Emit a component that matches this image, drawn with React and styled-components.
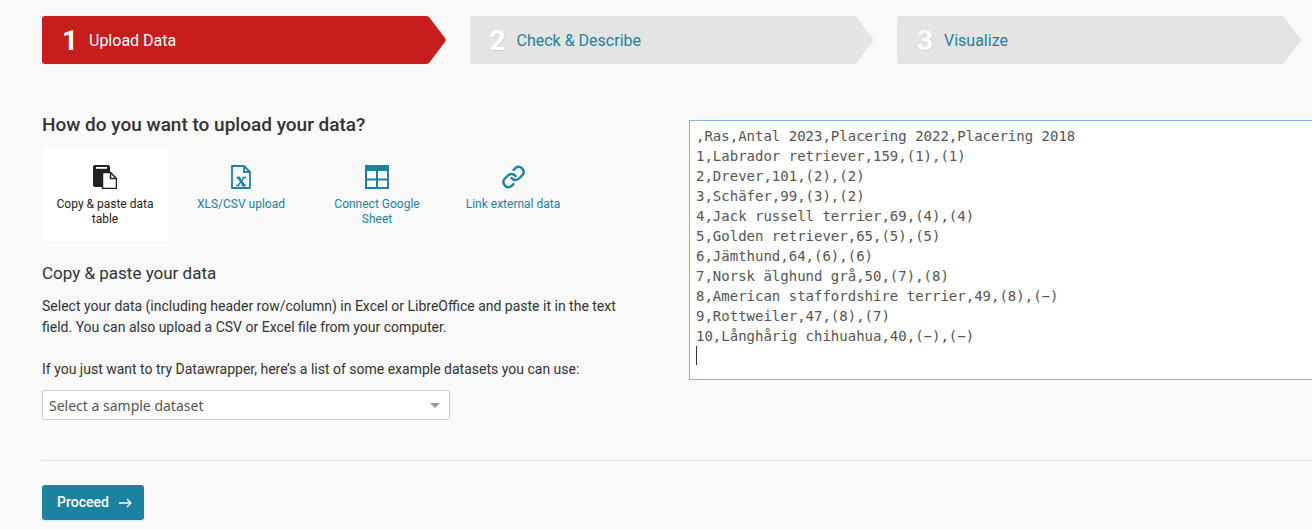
import styled, { createGlobalStyle } from "styled-components";

const GlobalStyle = createGlobalStyle`
html, body {
  margin: 0;
  background: #f9f9f9;
  overflow: hidden;
}
body {
  font-family: Roboto, "Liberation Sans", sans-serif;
  color: #333;
}
`;

const Page = styled.div`
height: 529px;
padding: 16px 0 0 42px;
box-sizing: border-box;
`;

const Steps = styled.div`
display: grid;
grid-template-columns: repeat(3, 404px);
column-gap: 23.5px;
`;

const Step = styled.div`
height: 48px;
display: flex;
align-items: center;
padding-left: 20px;
border-radius: 3px;
background: ${(p) => (p.$active ? "#c71e1d" : "#e4e4e4")};
clip-path: polygon(
  0 0,
  calc(100% - 19px) 0,
  calc(100% - 17px) 1px,
  calc(100% - 1px) 22px,
  100% 24px,
  calc(100% - 1px) 26px,
  calc(100% - 17px) 47px,
  calc(100% - 19px) 100%,
  0 100%
);
`;

const StepNumber = styled.span`
width: 27px;
font-size: 28px;
font-weight: 700;
color: #fff;
text-shadow: ${(p) => (p.$active ? "none" : "1px 1px 1px rgba(0,0,0,0.08)")};
`;

const StepLabel = styled.span`
font-size: 16px;
color: ${(p) => (p.$active ? "#fff" : "#1d81a2")};
`;

const Columns = styled.div`
display: grid;
grid-template-columns: 647px 1fr;
margin-top: 48px;
`;

const Left = styled.div`
padding-top: 2px;
`;

const Heading = styled.h3`
margin: 0 0 12px;
font-size: 19px;
line-height: 22px;
font-weight: 500;
color: #333;
`;

const Tabs = styled.div`
display: flex;
gap: 10px;
`;

const Tab = styled.div`
width: 126px;
height: 93px;
box-sizing: border-box;
padding: 17px 8px 0;
border-radius: 4px;
display: flex;
flex-direction: column;
align-items: center;
gap: 8px;
text-align: center;
font-size: 12px;
line-height: 15px;
background: ${(p) => (p.$active ? "#fff" : "transparent")};
color: ${(p) => (p.$active ? "#222" : "#1d81a2")};
svg {
  flex: none;
  display: block;
}
`;

const SubHeading = styled.h4`
margin: 22px 0 13px;
font-size: 17px;
line-height: 20px;
font-weight: 400;
color: #333;
`;

const Paragraph = styled.p`
margin: 0 0 21px;
width: 590px;
font-size: 14px;
line-height: 21px;
color: #333;
`;

const SelectBox = styled.div`
width: 408px;
height: 30px;
box-sizing: border-box;
margin-top: -11px;
padding: 0 9px 0 6px;
display: flex;
align-items: center;
justify-content: space-between;
background: #fff;
border: 1px solid #ccc;
border-radius: 2px;
font-family: "Noto Sans", "Open Sans", sans-serif;
font-size: 14px;
color: #555;
`;

const SelectArrow = styled.span`
width: 0;
height: 0;
border-left: 5px solid transparent;
border-right: 5px solid transparent;
border-top: 5px solid #999;
`;

const DataWrap = styled.div`
position: relative;
height: 260px;
margin-top: 8px;
overflow: hidden;
`;

const DataField = styled.textarea`
display: block;
width: calc(100% + 20px);
height: 100%;
box-sizing: border-box;
margin: 0;
padding: 5px 6px 6px;
border: 1px solid #7ab8e8;
border-radius: 0;
outline: none;
resize: none;
overflow: hidden;
background: #fff;
font-family: "DejaVu Sans Mono", "Liberation Mono", monospace;
font-size: 14px;
line-height: 20px;
color: #555;
`;

const Caret = styled.span`
position: absolute;
left: 7px;
top: 226px;
width: 1px;
height: 19px;
background: #333;
`;

const Divider = styled.hr`
margin: 40px 0 24px;
border: 0;
border-top: 1px solid #e5e5e5;
`;

const ProceedButton = styled.button`
width: 102px;
height: 35px;
padding: 0 0 2px 15px;
box-sizing: border-box;
display: flex;
align-items: center;
gap: 10px;
border: 0;
border-radius: 3px;
background: #1d81a2;
box-shadow: 0 1px 2px rgba(0, 0, 0, 0.1);
font-family: inherit;
font-size: 14px;
font-weight: 500;
color: #fff;
svg {
  margin-top: 2px;
}
`;

const CopyIcon = () => (
  <svg width="24" height="24" viewBox="0 0 24 24">
    <path fill="#222" d="M2 0h13a2 2 0 0 1 2 2v20H2a2 2 0 0 1-2-2V2a2 2 0 0 1 2-2z" />
    <rect x="3" y="2" width="11" height="1.800" fill="#fff" />
    <path fill="#fff" stroke="#222" strokeWidth="1.500" strokeLinejoin="round" d="M9.500 7.500h8l6 6v10h-14z" />
    <path fill="none" stroke="#222" strokeWidth="1.500" d="M17.500 7.500v6h6" />
  </svg>
);

const FileIcon = () => (
  <svg width="20" height="24" viewBox="0 0 20 24">
    <path fill="none" stroke="#1d81a2" strokeWidth="1.800" strokeLinejoin="round" d="M1 1h12l6 6v16H1z" />
    <path fill="none" stroke="#1d81a2" strokeWidth="1.800" d="M13 1v6h6" />
    <path fill="none" stroke="#1d81a2" strokeWidth="2.600" d="M7 12l6.500 9" />
    <path fill="none" stroke="#1d81a2" strokeWidth="1.300" d="M13.500 12l-7 9M5.500 12.500h4M11.500 12.500h3.500M5 20.500h3.500M10.500 20.500h4.500" />
  </svg>
);

const TableIcon = () => (
  <svg width="24" height="24" viewBox="0 0 24 24">
    <path
      fill="#1d81a2"
      fillRule="evenodd"
      d="M0 0h24v24H0zM2 6v7.500h9V6zM13 6v7.500h9V6zM2 15.500V22h9v-6.500zM13 15.500V22h9v-6.500z"
    />
  </svg>
);

const LinkIcon = () => (
  <svg width="25" height="24" viewBox="0 0 24 24" fill="none" stroke="#1d81a2" strokeWidth="2.400" strokeLinecap="round">
    <path d="M10 13a5 5 0 0 0 7.500.5l3.500-3.500a5 5 0 0 0-7-7l-2 2" />
    <path d="M14 11a5 5 0 0 0-7.500-.5L3 14a5 5 0 0 0 7 7l2-2" />
  </svg>
);

const ArrowIcon = () => (
  <svg width="13" height="10" viewBox="0 0 13 10" fill="none" stroke="#fff" strokeWidth="1.300">
    <path d="M0 5h12M8 1l4 4-4 4" />
  </svg>
);

const sampleData = `,Ras,Antal 2023,Placering 2022,Placering 2018
1,Labrador retriever,159,(1),(1)
2,Drever,101,(2),(2)
3,Schäfer,99,(3),(2)
4,Jack russell terrier,69,(4),(4)
5,Golden retriever,65,(5),(5)
6,Jämthund,64,(6),(6)
7,Norsk älghund grå,50,(7),(8)
8,American staffordshire terrier,49,(8),(−)
9,Rottweiler,47,(8),(7)
10,Långhårig chihuahua,40,(−),(−)
`;

const App = () => {
  return (
    <Page>
      <GlobalStyle />
      <Steps>
        <Step $active>
          <StepNumber $active>1</StepNumber>
          <StepLabel $active>Upload Data</StepLabel>
        </Step>
        <Step>
          <StepNumber>2</StepNumber>
          <StepLabel>Check &amp; Describe</StepLabel>
        </Step>
        <Step>
          <StepNumber>3</StepNumber>
          <StepLabel>Visualize</StepLabel>
        </Step>
      </Steps>
      <Columns>
        <Left>
          <Heading>How do you want to upload your data?</Heading>
          <Tabs>
            <Tab $active>
              <CopyIcon />
              Copy &amp; paste data table
            </Tab>
            <Tab>
              <FileIcon />
              XLS/CSV upload
            </Tab>
            <Tab>
              <TableIcon />
              Connect Google Sheet
            </Tab>
            <Tab>
              <LinkIcon />
              Link external data
            </Tab>
          </Tabs>
          <SubHeading>Copy &amp; paste your data</SubHeading>
          <Paragraph>
            Select your data (including header row/column) in Excel or LibreOffice and paste it in the text field. You
            can also upload a CSV or Excel file from your computer.
          </Paragraph>
          <Paragraph>If you just want to try Datawrapper, here’s a list of some example datasets you can use:</Paragraph>
          <SelectBox>
            Select a sample dataset
            <SelectArrow />
          </SelectBox>
        </Left>
        <DataWrap>
          <DataField readOnly value={sampleData} />
          <Caret />
        </DataWrap>
      </Columns>
      <Divider />
      <ProceedButton>
        Proceed
        <ArrowIcon />
      </ProceedButton>
    </Page>
  );
};

export default App;
